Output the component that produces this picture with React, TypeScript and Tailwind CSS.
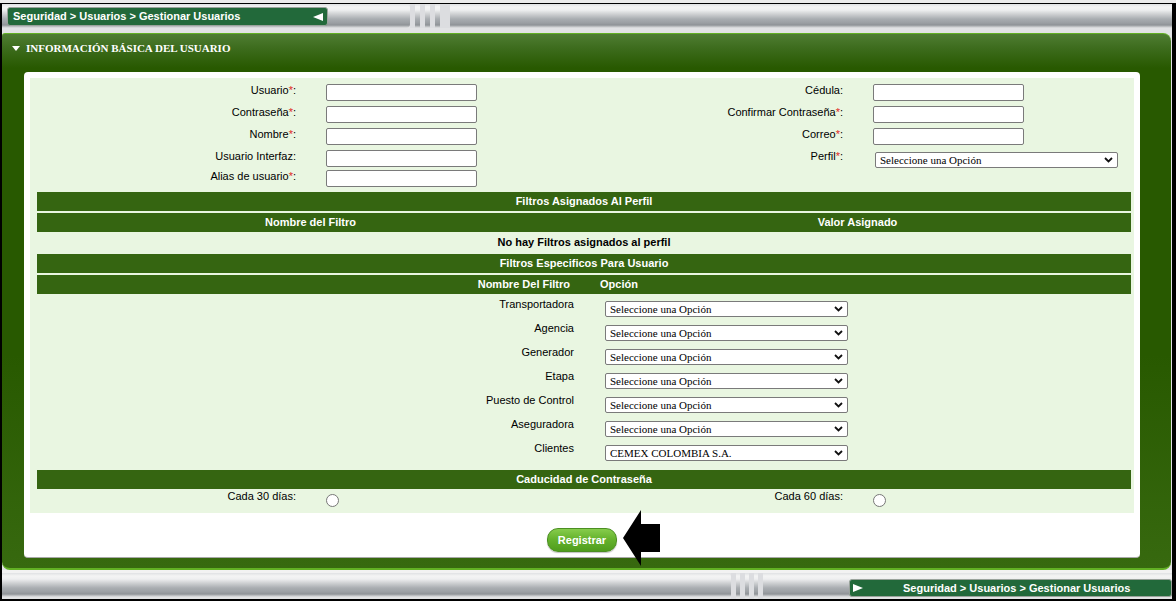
import React from "react";

const sans = "font-['Liberation_Sans',Arial,sans-serif]";
const serif = "font-['Liberation_Serif','Times_New_Roman',serif]";
const metal =
    "bg-[linear-gradient(to_bottom,#dfe1e3_0px,#f4f4f4_3px,#eeeff0_6px,#cfd1d3_10px,#a9adb1_15px,#9b9fa3_19px,#8f9397_21px,#c9cbcd_23px,#e2e3e4_24px)]";

function Star() {
    return <span className="text-[#e0281c]">*</span>;
}

function Field({ w = "w-[151px]" }: { w?: string }) {
    return <div className={`${w} h-[17px] ml-[30px] bg-white border border-[#7a7a7a] rounded-[2px]`} />;
}

function Select({ text, className = "" }: { text: string; className?: string }) {
    return (
        <div className={`relative w-[243px] h-[16px] bg-white border border-[#7a7a7a] rounded-[2px] ${className}`}>
            <span className={`absolute left-[4px] top-0 leading-[14px] text-[11px] text-black ${serif}`}>{text}</span>
            <svg className="absolute right-[4px] top-[4px]" width="9" height="6" viewBox="0 0 9 6">
                <path d="M1 1 L4.5 4.5 L8 1" fill="none" stroke="#111" strokeWidth="1.8" />
            </svg>
        </div>
    );
}

function Radio() {
    return <span className="block w-[13px] h-[13px] rounded-full border border-[#777] bg-white" />;
}

function Grip({ w = "w-[40px]" }: { w?: string }) {
    return (
        <div className={`${w} h-full flex items-stretch gap-[5px] px-[5px] bg-[#dcdde0]`}>
            <span className={`w-[5px] ${metal}`} />
            <span className={`w-[5px] ${metal}`} />
            <span className={`w-[5px] ${metal}`} />
        </div>
    );
}

function Crumb({ dir }: { dir: "left" | "right" }) {
    return (
        <div className="h-full flex items-center bg-[#22693a] border border-[#9aa39c] rounded-[3px] text-white font-bold text-[11px]">
            {dir === "right" && (
                <svg className="ml-[3px] mr-[40px]" width="10" height="8" viewBox="0 0 10 8">
                    <path d="M0 0 L10 4 L0 8 Z" fill="#fff" />
                </svg>
            )}
            <span className={dir === "left" ? "ml-[5px]" : ""}>Seguridad &gt; Usuarios &gt; Gestionar Usuarios</span>
            {dir === "left" && (
                <svg className="ml-auto mr-[4px]" width="10" height="8" viewBox="0 0 10 8">
                    <path d="M10 0 L0 4 L10 8 Z" fill="#fff" />
                </svg>
            )}
        </div>
    );
}

const filtros = [
    ["Transportadora", "Seleccione una Opción"],
    ["Agencia", "Seleccione una Opción"],
    ["Generador", "Seleccione una Opción"],
    ["Etapa", "Seleccione una Opción"],
    ["Puesto de Control", "Seleccione una Opción"],
    ["Aseguradora", "Seleccione una Opción"],
    ["Clientes", "CEMEX COLOMBIA S.A."],
];

export default function App() {
    return (
        <div className={`w-[1176px] h-[601px] bg-[#ebebeb] pt-[3px] overflow-hidden ${sans}`}>
            <div className="h-[598px] border-t border-l-2 border-r-4 border-b-2 border-black bg-[#e2e3e5] flex flex-col">
                {/* Top bar */}
                <div className="h-[24px] flex">
                    <div className={`w-[408px] h-full pl-[5px] pt-[3px] pb-[2px] rounded-r-[4px] ${metal}`}>
                        <div className="w-[321px] h-[19px]">
                            <Crumb dir="left" />
                        </div>
                    </div>
                    <Grip />
                    <div className={`flex-1 h-full ${metal}`} />
                </div>
                <div className="h-[5px]" />

                {/* Panel */}
                <div className="h-[537px] mr-[1px] flex flex-col rounded-tl-[3px] rounded-tr-[8px] rounded-b-[8px] border-t border-b-2 border-[#62b024] bg-[linear-gradient(to_bottom,#4f7d33_0px,#3d6c1d_14px,#285900_34px,#285900_60%,#37690f_100%)]">
                    <div className="h-[38px] flex items-start pt-[8px]">
                        <svg className="ml-[10px] mt-[4px]" width="8" height="5" viewBox="0 0 8 5">
                            <path d="M0 0 L8 0 L4 5 Z" fill="#fff" />
                        </svg>
                        <span className={`ml-[6px] text-white font-bold text-[11px] leading-[13px] ${serif}`}>
                            INFORMACIÓN BÁSICA DEL USUARIO
                        </span>
                    </div>

                    <div className="relative ml-[22px] w-[1116px] h-[486px] bg-white rounded-[4px] border-b border-[#a9a9a9] p-[6px] pb-0">
                        <div className="h-[435px] bg-[#e9f6e1] pt-[6px] text-[11px] text-black">
                            {/* Form */}
                            <div className="h-[22px] flex items-start">
                                <div className="w-[266px] text-right leading-[14px] -mt-px">Usuario<Star />:</div>
                                <Field />
                                <div className="w-[366px] text-right leading-[14px] -mt-px">Cédula:</div>
                                <Field />
                            </div>
                            <div className="h-[22px] flex items-start">
                                <div className="w-[266px] text-right leading-[14px] -mt-px">Contraseña<Star />:</div>
                                <Field />
                                <div className="w-[366px] text-right leading-[14px] -mt-px">Confirmar Contraseña<Star />:</div>
                                <Field />
                            </div>
                            <div className="h-[22px] flex items-start">
                                <div className="w-[266px] text-right leading-[14px] -mt-px">Nombre<Star />:</div>
                                <Field />
                                <div className="w-[366px] text-right leading-[14px] -mt-px">Correo<Star />:</div>
                                <Field />
                            </div>
                            <div className="h-[20px] flex items-start">
                                <div className="w-[266px] text-right leading-[14px] -mt-px">Usuario Interfaz:</div>
                                <Field />
                                <div className="w-[366px] text-right leading-[14px] -mt-px">Perfil<Star />:</div>
                                <Select text="Seleccione una Opción" className="ml-[32px] mt-[2px]" />
                            </div>
                            <div className="h-[22px] flex items-start">
                                <div className="w-[266px] text-right leading-[14px] -mt-px">Alias de usuario<Star />:</div>
                                <Field />
                            </div>

                            {/* Tables */}
                            <div className="ml-[7px] w-[1094px] flex flex-col gap-[2px] font-bold">
                                <div className="h-[19px] bg-[#356511] text-white flex items-center justify-center">
                                    Filtros Asignados Al Perfil
                                </div>
                                <div className="h-[19px] bg-[#356511] text-white flex items-center">
                                    <span className="w-1/2 text-center">Nombre del Filtro</span>
                                    <span className="w-1/2 text-center">Valor Asignado</span>
                                </div>
                                <div className="h-[18px] flex items-start justify-center leading-[14px] pt-px">
                                    No hay Filtros asignados al perfil
                                </div>
                                <div className="h-[19px] bg-[#356511] text-white flex items-center justify-center">
                                    Filtros Especificos Para Usuario
                                </div>
                                <div className="h-[19px] bg-[#356511] text-white flex items-center">
                                    <span className="w-[533px] text-right">Nombre Del Filtro</span>
                                    <span className="ml-[30px]">Opción</span>
                                </div>
                            </div>

                            <div className="ml-[7px] w-[1094px]">
                                {filtros.map(([label, value]) => (
                                    <div key={label} className="h-[24px] flex items-start">
                                        <div className="w-[537px] text-right leading-[14px] mt-[3px]">{label}</div>
                                        <Select text={value} className="ml-[31px] mt-[7px]" />
                                    </div>
                                ))}
                            </div>

                            <div className="mt-[8px] ml-[7px] w-[1094px] h-[19px] bg-[#356511] text-white font-bold flex items-center justify-center">
                                Caducidad de Contraseña
                            </div>
                            <div className="h-[24px] flex items-start">
                                <div className="w-[266px] text-right leading-[14px]">Cada 30 días:</div>
                                <div className="ml-[30px] w-[151px] pt-[5px]"><Radio /></div>
                                <div className="w-[366px] text-right leading-[14px]">Cada 60 días:</div>
                                <div className="ml-[30px] pt-[5px]"><Radio /></div>
                            </div>
                        </div>

                        <div className="flex justify-center pt-[15px]">
                            <button className="w-[70px] h-[24px] rounded-[11px] border border-[#4b8f22] bg-[linear-gradient(to_bottom,#86cc4c_0%,#66b32e_45%,#4f9d1d_100%)] text-white font-bold text-[11px] shadow-[0_1px_1px_rgba(0,0,0,0.25)]">
                                Registrar
                            </button>
                        </div>

                        {/* Pointer arrow */}
                        <svg className="absolute left-[599px] top-[438px]" width="38" height="57" viewBox="0 0 38 57">
                            <path d="M0 28 L18 0 L18 14 L37 14 L37 42 L18 42 L18 56 Z" fill="#000" />
                        </svg>
                    </div>
                </div>
                <div className="h-[3px] bg-[#f2f2f2]" />

                {/* Bottom bar */}
                <div className="h-[26px] flex">
                    <div className={`w-[729px] h-full rounded-r-[4px] ${metal}`} />
                    <Grip w="w-[32px]" />
                    <div className={`flex-1 h-full pt-[6px] pb-[2px] ${metal}`}>
                        <div className="ml-[86px] h-full">
                            <Crumb dir="right" />
                        </div>
                    </div>
                </div>
            </div>
        </div>
    );
}
